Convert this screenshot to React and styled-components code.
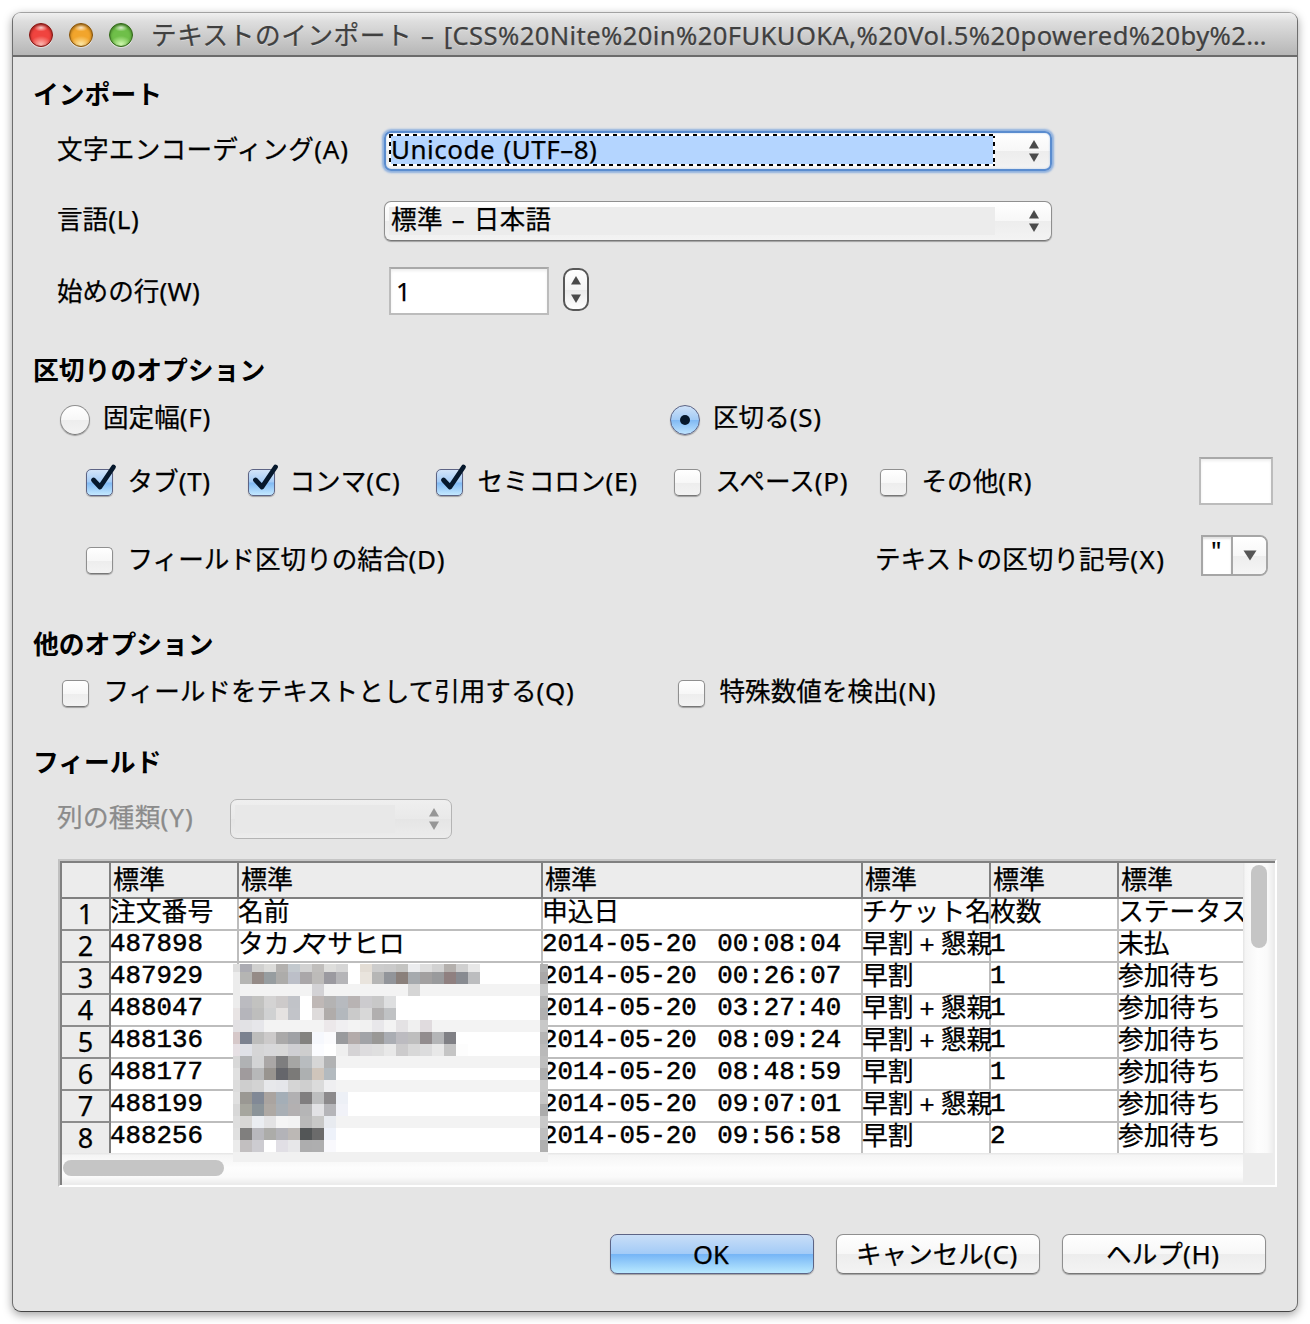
import React from "react";
import styled, { createGlobalStyle, css } from "styled-components";

const GlobalStyle = createGlobalStyle`
  * {
    box-sizing: border-box;
  }
  body {
    margin: 0;
    background: #fff;
    color: #000;
    font-family: "Noto Sans", "Noto Sans CJK JP", sans-serif;
    font-size: 25.6px;
    line-height: 32px;
    white-space: nowrap;
    -webkit-text-stroke: 0.25px;
  }
`;

const Window = styled.div`
  width: 1286px;
  height: 1300px;
  margin: 12px;
  border: 1px solid #6e6e6e;
  border-top-color: #a2a2a2;
  border-bottom-color: #444;
  border-radius: 9px;
  background: #e5e5e5;
  box-shadow: 0 3px 10px rgba(0, 0, 0, 0.36);
  overflow: hidden;
`;

const TitleBar = styled.header`
  display: flex;
  align-items: center;
  height: 44px;
  padding: 1px 0 0 16px;
  border-bottom: 2px solid #6b6b6b;
  background: linear-gradient(#f0f0f0, #dedede 20%, #b6b6b6);
  color: #404040;
  text-shadow: 0 1px 0 rgba(255, 255, 255, 0.4);
`;

const Light = styled.span`
  width: 24px;
  height: 24px;
  margin-right: 16px;
  border: 1px solid ${props => props.$edge};
  border-radius: 50%;
  background: radial-gradient(ellipse 7px 4px at 50% 16%, rgba(255, 255, 255, 0.75), transparent),
    radial-gradient(ellipse 11px 9px at 50% 95%, ${props => props.$glow}, transparent),
    ${props => props.$color};
  box-shadow: inset 0 1px 3px ${props => props.$edge}, 0 1px 0 rgba(255, 255, 255, 0.5);
`;

const Title = styled.div`
  margin: 3px 0 0 2px;
  letter-spacing: 0.6px;
  word-spacing: 1.5px;
`;

const Latin = styled.span`
  font-size: ${props => props.$size || 26}px;
  letter-spacing: ${props => props.$track || 0.7}px;
  word-spacing: ${props => props.$space || 0}px;
`;

const Heading = styled.h2`
  height: 40px;
  margin: ${props => props.$top}px 0 0 20px;
  font-size: 25.8px;
  font-weight: 700;
  line-height: 40px;
  -webkit-text-stroke: 0;
`;

const Row = styled.div`
  display: flex;
  align-items: center;
  height: ${props => props.$height}px;
  margin-top: ${props => props.$top || 0}px;
  padding-left: ${props => props.$indent || 44}px;
`;

const Label = styled.label`
  position: relative;
  top: ${props => props.$shift || 0}px;
  color: ${props => (props.$dim ? "#8b8b8b" : "#000")};
`;

const FieldLabel = styled(Label)`
  width: ${props => props.$width}px;
  letter-spacing: ${props => props.$track || 0}px;
`;

const raised = css`
  border: 1px solid #8f8f8f;
  border-bottom-color: #777;
  background: linear-gradient(#fff, #f7f7f7 50%, #ededed 51%, #f3f3f3);
  box-shadow: 0 1px 1px rgba(0, 0, 0, 0.3);
`;

const Select = styled.div`
  display: flex;
  align-items: center;
  justify-content: space-between;
  width: ${props => props.$width}px;
  height: 40px;
  padding: 0 11px 0 4px;
  border-radius: 7px;
  ${raised}
  ${props =>
    props.$focus &&
    css`
      border: 2px solid #5a8ccf;
      padding: 0 10px 0 3px;
      box-shadow: 0 0 2px 2px #8fb1df, inset 0 0 2px #a9c4e8;
    `}
  ${props =>
    props.$dim &&
    css`
      border-color: #b4b4b4;
      background: linear-gradient(#efefef, #e9e9e9 50%, #e5e5e5 51%, #ececec);
      box-shadow: none;
    `}
`;

const SelectValue = styled.span`
  flex: none;
  width: ${props => props.$width}px;
  height: ${props => (props.$focus ? 32 : 28)}px;
  padding-left: 2px;
  background: ${props => (props.$dim ? "#e8e8e8" : "#ececec")};
  line-height: 26px;
  letter-spacing: 0.3px;
  word-spacing: 2px;
  ${props =>
    props.$focus &&
    css`
      padding: 2px;
      margin-top: -3px;
      background: linear-gradient(#b4d5ff, #b4d5ff) 2px 2px / calc(100% - 4px) calc(100% - 4px) no-repeat,
        repeating-linear-gradient(90deg, #000 0 4px, #fff 4px 8px) 0 0 / 100% 2px no-repeat,
        repeating-linear-gradient(90deg, #fff 0 4px, #000 4px 8px) 0 100% / 100% 2px no-repeat,
        repeating-linear-gradient(#000 0 4px, #fff 4px 8px);
      line-height: 26px;
    `}
`;

const TextBox = styled.div`
  width: ${props => props.$width}px;
  height: 48px;
  padding: 7px 5px;
  border: 2px solid #bcbcbc;
  border-top-color: #a9a9a9;
  background: #fff;
  box-shadow: inset 0 2px 3px rgba(0, 0, 0, 0.07);
`;

const Spinner = styled.div`
  display: flex;
  justify-content: center;
  align-items: center;
  width: 26px;
  height: 43px;
  margin: -3px 0 0 14px;
  border: 2px solid #585858;
  border-radius: 10px;
  background: linear-gradient(#fff, #f4f4f4 50%, #e9e9e9 51%, #fff);
`;

const RadioDot = styled.span`
  display: flex;
  align-items: center;
  justify-content: center;
  width: 30px;
  height: 30px;
  margin-right: 13px;
  border-radius: 50%;
  ${raised}
  ${props =>
    props.$on &&
    css`
      border-color: #5d6485;
      background: linear-gradient(#cfe2f8, #a3cbf6 49%, #80b9f3 51%, #bfe4ff);
    `}
  &::after {
    content: "";
    width: 10px;
    height: 10px;
    border-radius: 50%;
    background: ${props => (props.$on ? "#06182c" : "transparent")};
  }
`;

const Box = styled.span`
  flex: none;
  width: 27px;
  height: 27px;
  margin: 3px 15px 0 0;
  border-radius: 5px;
  ${raised}
  ${props =>
    props.$on &&
    css`
      border-color: #5d6485;
      background: linear-gradient(#d3e5f9, #a3cbf6 49%, #80b9f3 51%, #c3e8ff);
    `}
  svg {
    display: block;
    overflow: visible;
  }
`;

const Option = styled.div`
  display: flex;
  align-items: center;
  width: ${props => (props.$width ? props.$width + "px" : "auto")};
`;

const Combo = styled.div`
  display: flex;
  width: 67px;
  height: 41px;
  margin: -8px 29px 0 auto;
  border: 2px solid #a6a6a6;
  border-radius: 0 8px 8px 0;
  background: #fff;
  line-height: 28px;
`;

const ComboValue = styled.span`
  width: 30px;
  padding-left: 8px;
  border-right: 2px solid #a6a6a6;
  box-shadow: inset 0 2px 2px rgba(0, 0, 0, 0.12);
`;

const ComboButton = styled.span`
  flex: 1;
  display: flex;
  align-items: center;
  justify-content: center;
  border-radius: 0 6px 6px 0;
  background: linear-gradient(#fff, #f7f7f7 50%, #ededed 51%, #f5f5f5);
`;

const Preview = styled.div`
  position: relative;
  display: grid;
  grid-template-columns: 1181px 33px;
  grid-template-rows: 290px 32px;
  width: 1219px;
  height: 328px;
  margin: 18px 0 0 45px;
  border: 2px solid #fff;
  border-top-color: #c6c6c6;
  border-left-color: #c0c0c0;
  background: #ececec;
  box-shadow: inset 2px 2px 0 #808080;
  padding: 2px 0 0 2px;
`;

const Sheet = styled.div`
  overflow: hidden;
  background: #fff;
`;

const SheetRow = styled.div`
  display: grid;
  grid-template-columns: 49px 128px 304px 320px 128px 128px 128px;
  height: ${props => (props.$head ? 36 : 32)}px;
  background: ${props =>
    props.$head
      ? "linear-gradient(#808080, #808080) 0 100% / 100% 2px no-repeat #ececec"
      : "linear-gradient(#bdbdbd, #bdbdbd) 0 100% / 100% 2px no-repeat #fff"};
`;

const HeadCell = styled.div`
  padding-left: 2px;
  border-right: 2px solid #808080;
  font-size: 26px;
  line-height: 32px;
`;

const NumberCell = styled.div`
  border-right: 2px solid #808080;
  border-bottom: 2px solid #8c8c8c;
  background: #ececec;
  font-size: 27px;
  line-height: 29px;
  text-align: center;
`;

const Cell = styled.div`
  overflow: clip;
  overflow-clip-margin: 1px;
  background: linear-gradient(#bdbdbd, #bdbdbd) 100% 0 / 2px 100% no-repeat;
  font-family: "Liberation Mono", "Noto Sans CJK JP", monospace;
  font-size: 25.8px;
  line-height: ${props => (props.$wide ? 32 : 28)}px;
  text-indent: -1px;
  word-spacing: ${props => props.$space || 0}px;
  -webkit-text-stroke: ${props => (props.$wide ? 0.25 : 0.5)}px;
`;

const Pulled = styled.span`
  margin-left: -14px;
`;

const Mosaic = styled.svg`
  position: absolute;
  left: 173px;
  top: 103px;
`;

const Track = styled.div`
  padding: ${props => (props.$vertical ? "2px 0 0 8px" : "7px 0 0 1px")};
  width: ${props => (props.$vertical ? "30px" : "auto")};
  height: ${props => (props.$vertical ? "auto" : "30px")};
  background: linear-gradient(${props => (props.$vertical ? "to right" : "to bottom")}, #e4e4e4, #f5f5f5 8%, #fdfdfd 50%, #fafafa 80%, #eee);
`;

const Thumb = styled.div`
  width: ${props => props.$width}px;
  height: ${props => props.$height}px;
  border-radius: 8px;
  background: #c5c5c5;
`;

const Footer = styled.footer`
  display: flex;
  gap: 22px;
  justify-content: flex-end;
  margin: 47px 31px 0 0;
`;

const Button = styled.button`
  width: 204px;
  height: 40px;
  padding: 1px 2px 0 0;
  border-radius: 7px;
  color: #000;
  font: inherit;
  ${raised}
  ${props =>
    props.$primary &&
    css`
      border-color: #5d6485;
      background: linear-gradient(#c9def7, #a3cbf7 49%, #76b5f6 51%, #b9e9ff);
    `}
`;

const Arrows = ({ color = "#4a4a4a", gap = 0 }) => (
  <svg width="12" height={24 + gap} viewBox={`0 0 12 ${24 + gap}`} fill={color}>
    <path d="M6 1 L11 9.5 H1 Z" />
    <path d={`M6 ${23 + gap} L11 ${14.5 + gap} H1 Z`} />
  </svg>
);

const Check = ({ on, text, mnemonic, width, shift = 0 }) => (
  <Option $width={width}>
    <Box $on={on}>
      {on && (
        <svg width="25" height="25" viewBox="0 0 25 25">
          <path d="M6.5 10 L13 17 L26.500 -3" fill="none" stroke="#06182c" strokeWidth="4.800" strokeLinecap="round" strokeLinejoin="round" />
        </svg>
      )}
    </Box>
    <Label $shift={shift}>
      {text}
      <Latin>({mnemonic})</Latin>
    </Label>
  </Option>
);

const Radio = ({ on, text, mnemonic, width }) => (
  <Option $width={width}>
    <RadioDot $on={on} />
    <Label $shift={-3}>
      {text}
      <Latin>({mnemonic})</Latin>
    </Label>
  </Option>
);

const columns = ["標準", "標準", "標準", "標準", "標準", "標準"];

const records = [
  ["注文番号", "名前", "申込日", "チケット名", "枚数", "ステータス"],
  ["487898", <>タカノ<Pulled>マサヒロ</Pulled></>, "2014-05-20 00:08:04", "早割 + 懇親", "1", "未払"],
  ["487929", "", "2014-05-20 00:26:07", "早割", "1", "参加待ち"],
  ["488047", "", "2014-05-20 03:27:40", "早割 + 懇親", "1", "参加待ち"],
  ["488136", "", "2014-05-20 08:09:24", "早割 + 懇親", "1", "参加待ち"],
  ["488177", "", "2014-05-20 08:48:59", "早割", "1", "参加待ち"],
  ["488199", "", "2014-05-20 09:07:01", "早割 + 懇親", "1", "参加待ち"],
  ["488256", "", "2014-05-20 09:56:58", "早割", "2", "参加待ち"]
];

const isWide = value => typeof value !== "string" || !/^[0-9]/.test(value);

// Pixelated names: background, right edge, then the blocks from the left
const mosaic = [
  ["fff", "b0b0b0", "dedede ababb2 d0d0cf dcdcda b3b1af c3c9ce d2d2d2 c0bebc dededc d6d6d6 fff e3ddd5 ccc cacaca c4c4c2 ecedef dedede d2d2d2 b4b0ad d0d0d0 e8e8e8"],
  ["fff", "aaa8a8", "ececec b5b5b3 958b87 979da0 adacaa bcbfc8 aaa7a9 bdbbb9 9b9aa0 b5b5b8 fff e9e4dd b6b6b5 92959a 8a807b a6aaae a2a0a0 999a9c 8f8080 888b91 bcbdbf"],
  ["f3f3f3", "c8c8c8", "ececec f3f3f3 f3f3f3 f3f3f3 f3f3f3 f3f3f3 f3f3f3 d3d2d5 f3f3f3 f3f3f3 f3f3f3 f3f3f3 f3f3f3 f3f3f3 f3f3f3 d5d5d5"],
  ["fff", "b5b5b5", "ececec bbbbc0 c2c2c0 d4d3d3 cdcaca c1c3c8 fff bfb8b6 b4b3b3 b7babf b8b3b3 cccbce c8c8c8 dedfe0"],
  ["fff", "b0b0b0", "e8e4e4 b5b5bb bebebd d0d1d2 e5e2e1 c2c4c9 fff dedbdb b0acaa b3b8bd cacaca d8d8d8 b1afaf c0c2c4"],
  ["f3f3f3", "c8c8c8", "e2e0e3 e2e2e5 e6e6ea f3f3f3 f3f3f3 f3f3f3 f3f3f3 f3f3f3 ece8ea f0eff1 f3f3f3 f1f1f1 e8e7ea f3f3f3 e4e2e4 f0f0f0 e0dbde"],
  ["fff", "b5b5b5", "d6c8c9 7b8290 bdbdbc cccaca aaa9a9 9fa1a5 83827f f6f8fd fbfbfd 999a9d b3abaa a1a3a7 999896 aaadb3 bcbbc0 bebebe 928c8e b4b5b7 808085"],
  ["fff", "bababa", "e6e0e4 dfe1e7 d5d5d6 d8d8da d8d8d8 cfcfd3 cecece fbfcff fff efefef d5d3d5 dddcde dfdfdf e8e8e8 cccbcc d8d8d8 dcdcdd e8e8e8 c5c5c5 fdfdfd"],
  ["f3f3f3", "bebebe", "d8d8d8 b0b2b4 d3d4d5 aaa7a6 7e7e7f a6a6a4 b8bcbf d6d6d6 b1b2b3"],
  ["fff", "aeaeae", "e0e0e0 a09b9d b7b8b9 98948f 65666b 7b7a78 adb0b1 cfc5bb b3babf"],
  ["f3f3f3", "c8c8c8", "dcdcdc cecece d3d3d3 e7e8eb e5e6ea d5d5d5 cfcfcf dbdbdb efeff1"],
  ["fff", "c4c4c4", "e0e0e0 9a9893 818996 aaa4a0 a4aeb7 b1b0b2 807e7f bdbebf 8c8a8c edf0f6"],
  ["fff", "acacac", "d8d8d8 a6a69e 8b9499 aea9a4 a9afb5 b3b0b1 b5b5b6 e2e2e5 b5b5b9 f1f2f8"],
  ["f3f3f3", "c8c8c8", "dedede d8d7d5 ebeef2 e3e3e4 f5f5f5 f3f3f3 b9b9b9 c8c8c7 e8ebf0"],
  ["fff", "bebebe", "e0e0e0 807f7e b8b8bd acaca9 b3b3b8 bcb8b5 535657 6b6b6b eef2fa"],
  ["fff", "b0b0b0", "ebebeb c2bfc0 cdccd1 fff e1dfe5 e7e7e9 adadae aeaeaf f9f9fd"]
];

const MaskedNames = () => (
  <Mosaic width="315" height="198" shapeRendering="crispEdges">
    {mosaic.map(([base, edge, cells], r) => {
      const y = r === 0 ? 0 : 8 + (r - 1) * 12;
      const h = r === 0 ? 8 : 12;
      return (
        <g key={r}>
          <rect x="0" y={y} width="307" height={h} fill={"#" + base} />
          {cells.split(" ").map((color, c) => (
            <rect key={c} x={c === 0 ? 0 : 7 + (c - 1) * 12} y={y} width={c === 0 ? 7 : 12} height={h} fill={"#" + color} />
          ))}
          <rect x="307" y={y} width="8" height={h} fill={"#" + edge} />
        </g>
      );
    })}
    <rect y="188" width="315" height="10" fill="#f1f1f1" />
  </Mosaic>
);

const App = () => (
  <>
    <GlobalStyle />
    <Window>
      <TitleBar>
        <Light $color="#f0443f" $edge="#7d1512" $glow="#ffc0b8" />
        <Light $color="#f2a52c" $edge="#80500c" $glow="#ffeeb0" />
        <Light $color="#6fbf49" $edge="#2f6318" $glow="#d8ffb8" />
        <Title>
          テキストのインポート <Latin $size={25.6} $track={0.4} $space={2.5}>– [CSS%20Nite%20in%20FUKUOKA,%20Vol.5%20powered%20by%2…</Latin>
        </Title>
      </TitleBar>

      <Heading $top={17}>インポート</Heading>
      <Row $top={15} $height={44}>
        <FieldLabel $width={327} $shift={-2} $track={0.3}>
          文字エンコーディング<Latin $track={0.9}>(A)</Latin>
        </FieldLabel>
        <Select $width={668} $focus>
          <SelectValue $width={606} $focus>
            <Latin $track={0.5} $space={1}>Unicode (UTF–8)</Latin>
          </SelectValue>
          <Arrows />
        </Select>
      </Row>
      <Row $top={26} $height={44}>
        <FieldLabel $width={327} $shift={-2}>
          言語<Latin>(L)</Latin>
        </FieldLabel>
        <Select $width={668}>
          <SelectValue $width={606}>標準 – 日本語</SelectValue>
          <Arrows />
        </Select>
      </Row>
      <Row $top={22} $height={52}>
        <FieldLabel $width={332}>
          始めの行<Latin $track={0.3}>(W)</Latin>
        </FieldLabel>
        <TextBox $width={160}>1</TextBox>
        <Spinner>
          <Arrows gap={5} />
        </Spinner>
      </Row>

      <Heading $top={33}>区切りのオプション</Heading>
      <Row $top={10} $height={40} $indent={47}>
        <Radio text="固定幅" mnemonic="F" width={610} />
        <Radio on text="区切る" mnemonic="S" />
      </Row>
      <Row $top={16} $height={50} $indent={72.5}>
        <Check on text="タブ" mnemonic="T" width={162} />
        <Check on text="コンマ" mnemonic="C" width={188} />
        <Check on text="セミコロン" mnemonic="E" width={238} />
        <Check text="スペース" mnemonic="P" width={206} />
        <Check text="その他" mnemonic="R" width={319.5} />
        <TextBox $width={74} />
      </Row>
      <Row $top={28} $height={50} $indent={72.5}>
        <Check text="フィールド区切りの結合" mnemonic="D" width={789.5} />
        <Label>
          テキストの区切り記号<Latin $track={1.5}>(X)</Latin>
        </Label>
        <Combo>
          <ComboValue>"</ComboValue>
          <ComboButton>
            <svg width="14" height="11" viewBox="0 0 14 11">
              <path d="M0.500 0.500 H13.500 L7 10.500 Z" fill="#555" />
            </svg>
          </ComboButton>
        </Combo>
      </Row>

      <Heading $top={40}>他のオプション</Heading>
      <Row $top={3} $height={50} $indent={48.5}>
        <Check text="フィールドをテキストとして引用する" mnemonic="Q" width={616} shift={-1} />
        <Check text="特殊数値を検出" mnemonic="N" shift={-1} />
      </Row>

      <Heading $top={25}>フィールド</Heading>
      <Row $top={15} $height={44}>
        <FieldLabel $width={173} $shift={-2} $dim $track={0.3}>
          列の種類<Latin $track={0.9}>(Y)</Latin>
        </FieldLabel>
        <Select $width={222} $dim>
          <SelectValue $width={160} $dim />
          <Arrows color="#969696" />
        </Select>
      </Row>

      <Preview>
        <Sheet>
          <SheetRow $head>
            <HeadCell />
            {columns.map((name, i) => (
              <HeadCell key={i}>{name}</HeadCell>
            ))}
          </SheetRow>
          {records.map((record, i) => (
            <SheetRow key={i}>
              <NumberCell>{i + 1}</NumberCell>
              {record.map((value, j) => (
                <Cell key={j} $wide={isWide(value)} $space={j === 2 ? 5 : j === 3 ? -9.7 : 0}>
                  {value}
                </Cell>
              ))}
            </SheetRow>
          ))}
        </Sheet>
        <Track $vertical>
          <Thumb $width={16} $height={83} />
        </Track>
        <Track>
          <Thumb $width={161} $height={16} />
        </Track>
        <MaskedNames />
      </Preview>

      <Footer>
        <Button $primary>OK</Button>
        <Button>
          キャンセル<Latin>(C)</Latin>
        </Button>
        <Button>
          ヘルプ<Latin>(H)</Latin>
        </Button>
      </Footer>
    </Window>
  </>
);

export default App;
